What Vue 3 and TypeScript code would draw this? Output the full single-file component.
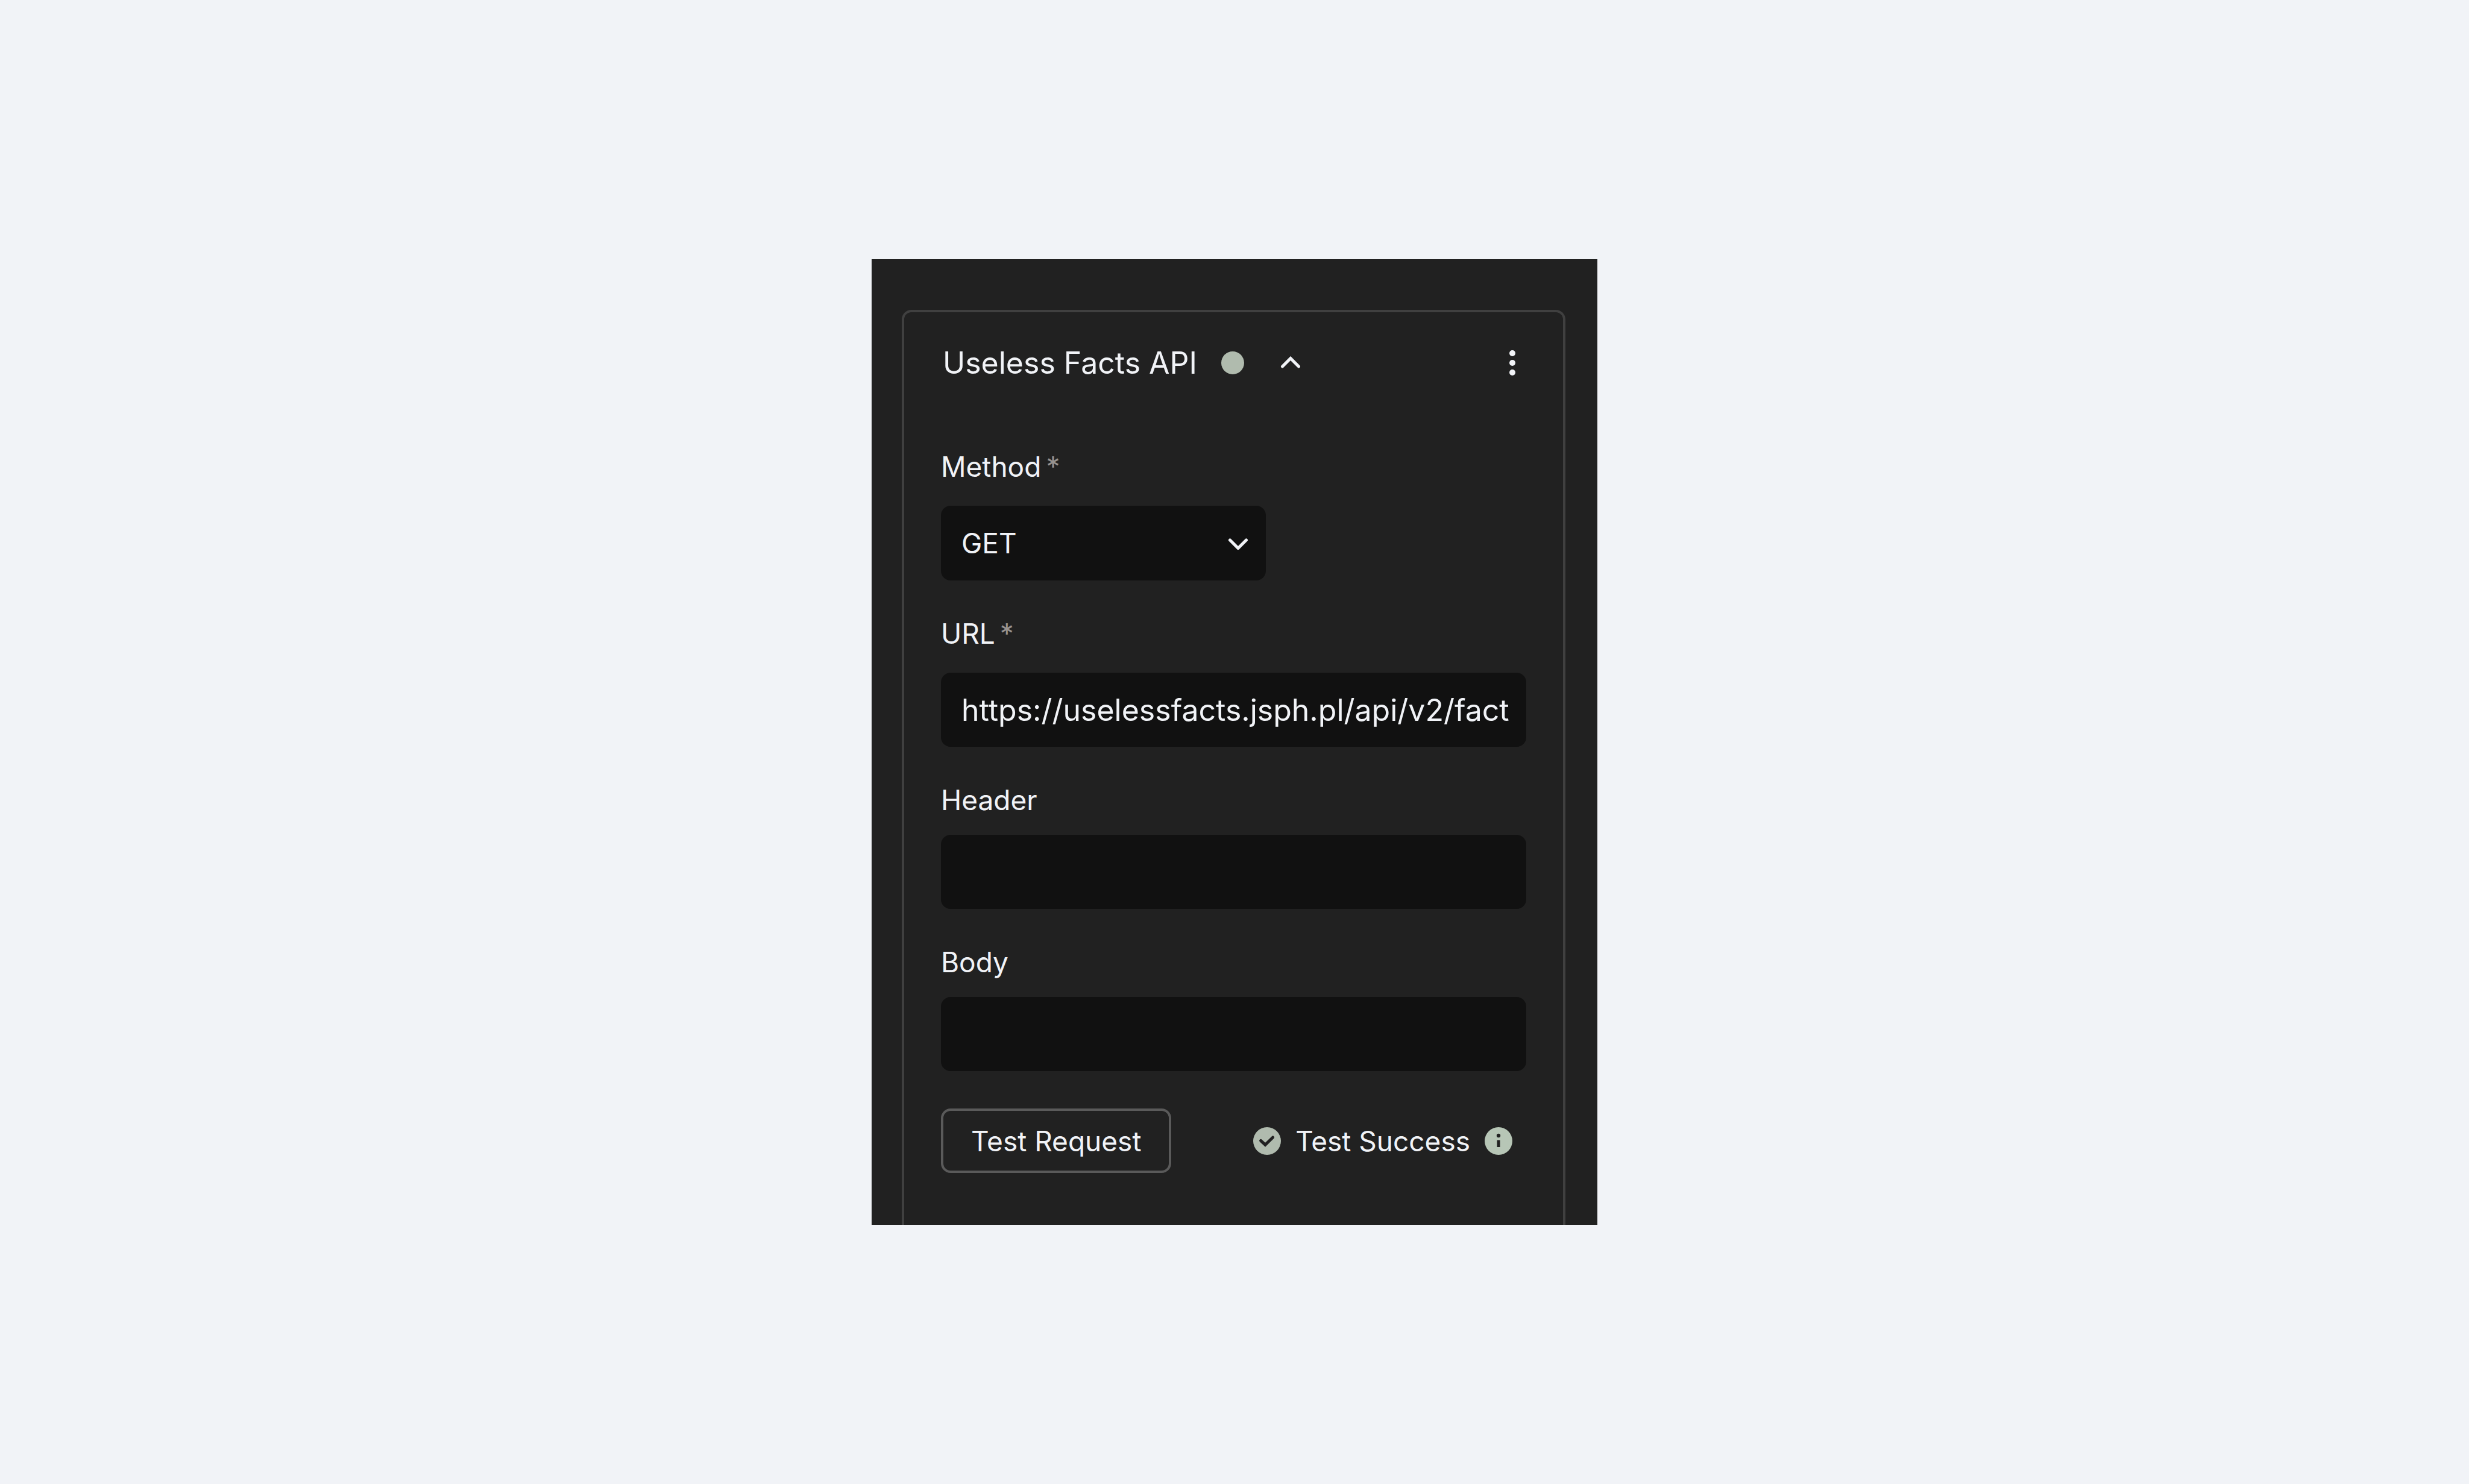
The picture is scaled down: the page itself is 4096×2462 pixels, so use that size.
<script setup lang="ts">
import { ref } from 'vue'

const method = ref('GET')
const url = ref('https://uselessfacts.jsph.pl/api/v2/fact')
const header = ref('')
const body = ref('')
const methods = ['GET', 'POST', 'PUT', 'PATCH', 'DELETE']
</script>

<template>
  <main class="page">
    <section class="panel">
      <form class="card" @submit.prevent>
        <header class="head">
          <h1 class="title">Useless Facts API</h1>
          <span class="dot"></span>
          <button type="button" class="icon-btn toggle" aria-label="Collapse">
            <svg class="chevron" viewBox="0 0 34 22"><path d="M3.500 17 17 3.500 30.500 17" /></svg>
          </button>
          <button type="button" class="icon-btn more" aria-label="More options">
            <svg class="kebab" viewBox="0 0 12 44">
              <circle cx="6" cy="6" r="5" /><circle cx="6" cy="22" r="5" /><circle cx="6" cy="38" r="5" />
            </svg>
          </button>
        </header>

        <div class="field required">
          <label class="label" for="method">Method<span class="star">*</span></label>
          <div class="select">
            <select id="method" v-model="method" class="control">
              <option v-for="m in methods" :key="m">{{ m }}</option>
            </select>
            <svg class="chevron caret" viewBox="0 0 34 22"><path d="M3.500 6 17 19.500 30.500 6" /></svg>
          </div>
        </div>

        <div class="field required">
          <label class="label" for="url">URL<span class="star">*</span></label>
          <input id="url" v-model="url" class="control large" type="text" />
        </div>

        <div class="field">
          <label class="label" for="header">Header</label>
          <input id="header" v-model="header" class="control" type="text" />
        </div>

        <div class="field">
          <label class="label" for="body">Body</label>
          <input id="body" v-model="body" class="control" type="text" />
        </div>

        <footer class="foot">
          <button type="submit" class="test">Test Request</button>
          <div class="status">
            <svg class="badge muted" viewBox="0 0 46 46">
              <circle cx="23" cy="23" r="23" />
              <path class="mark" d="M12.600 22.400 20 29.200 32.600 17" />
            </svg>
            <span>Test Success</span>
            <button type="button" class="icon-btn" aria-label="Details">
              <svg class="badge" viewBox="0 0 46 46">
                <circle cx="23" cy="23" r="23" />
                <circle class="ink" cx="23" cy="14" r="3.200" />
                <path class="stem" d="M23 21.500V33" />
              </svg>
            </button>
          </div>
        </footer>
      </form>
    </section>
  </main>
</template>

<style>
body {
  background: #f1f3f7;
}
</style>

<style scoped>
.page {
  display: flex;
  align-items: center;
  justify-content: center;
  min-height: 100vh;
  font-family: Inter, "Liberation Sans", sans-serif;
  font-size: 46px;
  font-weight: 400;
  line-height: 56px;
  color: #f1f3f7;
}

.panel {
  box-sizing: border-box;
  width: 100%;
  max-width: 1204px;
  padding: 84px 53px 0 50px;
  background: #212121;
}

.card {
  padding: 56px 61px 86px;
  border: 4px solid #404040;
  border-bottom: 0;
  border-radius: 16px 16px 0 0;
}

.head {
  display: flex;
  align-items: center;
  margin-bottom: 116px;
}

.title {
  margin: 0 0 0 3px;
  font-size: 50px;
  font-weight: inherit;
}

.dot {
  width: 38px;
  height: 38px;
  margin-left: 40px;
  border-radius: 50%;
  background: #b0bbae;
}

.icon-btn {
  display: flex;
  padding: 0;
  border: 0;
  background: none;
}

.toggle {
  margin-left: 60px;
}

.more {
  margin: 0 17px 0 auto;
}

.chevron {
  width: 34px;
  height: 22px;
  fill: none;
  stroke: #f1f3f7;
  stroke-width: 5;
  stroke-linecap: round;
}

.kebab {
  width: 12px;
  height: 44px;
  fill: #f1f3f7;
}

.field {
  display: flex;
  flex-direction: column;
  gap: 30px;
  margin-bottom: 60px;
}

.required {
  gap: 37px;
}

.label {
  display: flex;
  gap: 8px;
}

.star {
  color: #989390;
}

.select {
  display: grid;
  align-items: center;
  width: 100%;
  max-width: 539px;
}

.control {
  box-sizing: border-box;
  width: 100%;
  height: 123px;
  padding: 0 28px 0 34px;
  border: 0;
  border-radius: 16px;
  outline: 0;
  appearance: none;
  background: #111111;
  color: inherit;
  font: inherit;
}

.select .control {
  grid-area: 1 / 1;
  height: 124px;
}

.caret {
  grid-area: 1 / 1;
  justify-self: end;
  margin-right: 29px;
  pointer-events: none;
}

.large {
  font-size: 50px;
}

.foot {
  display: flex;
  align-items: center;
  justify-content: space-between;
  padding: 2px 23px 0 0;
}

.test {
  height: 107px;
  padding: 0 46px;
  border: 4px solid #5a5a5a;
  border-radius: 16px;
  background: none;
  color: inherit;
  font: inherit;
}

.status {
  display: flex;
  align-items: center;
  gap: 24px;
}

.badge {
  width: 46px;
  height: 46px;
  fill: #b7c6b6;
}

.muted {
  fill: #b0bbae;
}

.mark,
.stem {
  fill: none;
  stroke: #212121;
  stroke-width: 5;
}

.mark {
  stroke-linecap: round;
}

.ink {
  fill: #212121;
}
</style>
